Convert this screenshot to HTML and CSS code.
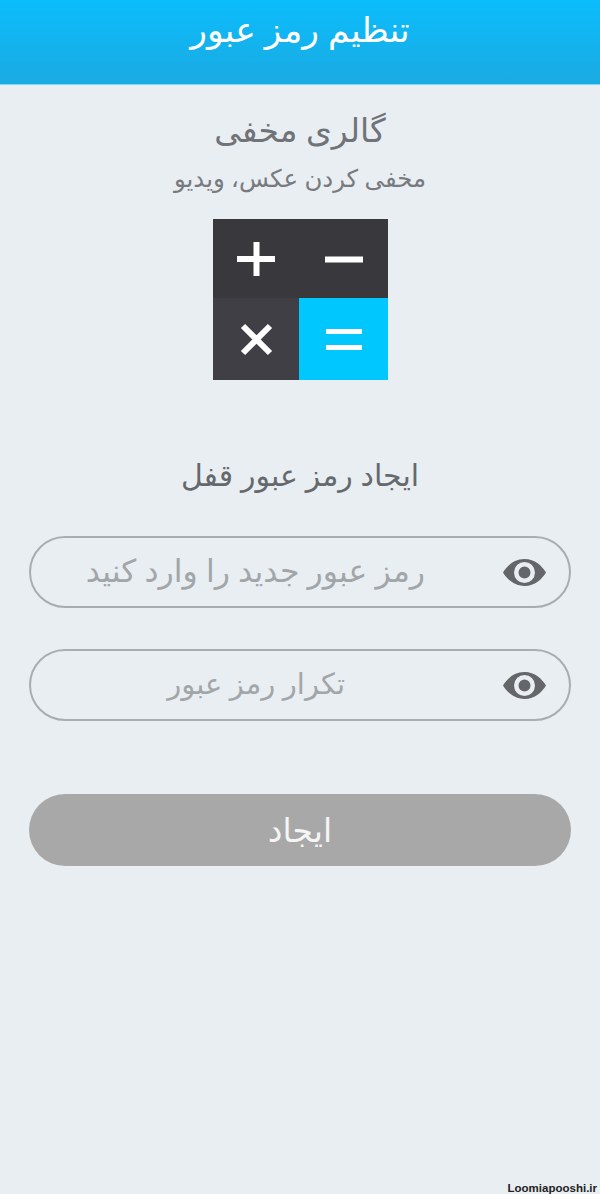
FILE: index.html
```html
<!DOCTYPE html>
<html lang="fa" dir="rtl">
<head><meta charset="utf-8"><title>تنظیم رمز عبور</title><link rel="stylesheet" href="styles.css"></head>
<body>
<div class="page">
  <header class="bar"><span class="bar-title">تنظیم رمز عبور</span></header>
  <main class="content">
    <h1 class="app-name">گالری مخفی</h1>
    <p class="app-sub">مخفی کردن عکس، ویدیو</p>
    <svg class="logo" width="175" height="161" viewBox="0 0 175 161">
      <rect width="175" height="80" fill="#39383d"/>
      <rect y="79" width="87" height="82" fill="#403f45"/>
      <rect x="86" y="79" width="89" height="82" fill="#00c8ff"/>
      <path d="M24 40H62M43.500 23V57" stroke="#fff" stroke-width="6"/>
      <path d="M112 40.500H150" stroke="#fff" stroke-width="6"/>
      <path d="M30 107L57 134M57 107L30 134" stroke="#fff" stroke-width="6"/>
      <path d="M113 112.500H149M113 128.500H149" stroke="#fff" stroke-width="5"/>
    </svg>
    <h2 class="form-title">ایجاد رمز عبور قفل</h2>
    <div class="field">
      <span class="placeholder ph-one">رمز عبور جدید را وارد کنید</span>
      <svg class="eye" width="43" height="27" viewBox="0 0 43 27"><path fill-rule="evenodd" fill="#646669" d="M21.500 0C32 0 39 7 43 13.500C39 20 32 27 21.500 27C11 27 4 20 0 13.500C4 7 11 0 21.500 0ZM21.500 3A10.500 10.500 0 1 0 21.500 24A10.500 10.500 0 1 0 21.500 3ZM21.500 7.500A6 6 0 1 1 21.500 19.500A6 6 0 1 1 21.500 7.500Z"/></svg>
    </div>
    <div class="field">
      <span class="placeholder ph-two">تکرار رمز عبور</span>
      <svg class="eye" width="43" height="27" viewBox="0 0 43 27"><path fill-rule="evenodd" fill="#646669" d="M21.500 0C32 0 39 7 43 13.500C39 20 32 27 21.500 27C11 27 4 20 0 13.500C4 7 11 0 21.500 0ZM21.500 3A10.500 10.500 0 1 0 21.500 24A10.500 10.500 0 1 0 21.500 3ZM21.500 7.500A6 6 0 1 1 21.500 19.500A6 6 0 1 1 21.500 7.500Z"/></svg>
    </div>
    <div class="submit">ایجاد</div>
  </main>
  <footer class="watermark">Loomiapooshi.ir</footer>
</div>
</body>
</html>
```
FILE: styles.css
```css
* { box-sizing: border-box; }
html, body { margin: 0; padding: 0; }
body { font-family: "Noto Sans", "DejaVu Sans", sans-serif; background: #e9eef2; }
.page { width: 600px; height: 1194px; display: flex; flex-direction: column; position: relative; overflow: hidden; }
.bar { height: 85px; background: linear-gradient(#0bbdfc, #1aaae2); border-bottom: 1px solid #7fd6f5; color: #fff; display: flex; justify-content: center; padding-top: 7px; }
.bar-title { font-size: 34.500px; line-height: 44px; }
.content { display: flex; flex-direction: column; align-items: center; padding: 0 29px; }
.app-name { font-size: 33px; font-weight: 400; color: #707377; margin: 23px 0 0; line-height: 44px; }
.app-sub { font-size: 24.400px; color: #777a7e; margin: 9px 0 0; line-height: 34px; }
.logo { margin-top: 24px; display: block; }
.form-title { font-size: 30px; font-weight: 400; color: #65696d; margin: 73px 0 0; line-height: 44px; }
.field { width: 100%; height: 72px; border: 2px solid #a9adb0; border-radius: 36px; display: flex; align-items: center; position: relative; }
.form-title + .field { margin-top: 39px; }
.field + .field { margin-top: 41px; }
.placeholder { color: #a2a6a9; position: absolute; line-height: 40px; top: 12px; }
.ph-one { right: 144px; font-size: 31.500px; }
.ph-two { right: 224px; font-size: 29px; }
.eye { position: absolute; left: 472px; top: 21px; }
.submit { width: 100%; height: 72px; margin-top: 73px; padding-bottom: 2px; background: #a8a8a8; border-radius: 36px; color: #f5f5f5; font-size: 33px; display: flex; align-items: center; justify-content: center; }
.watermark { position: absolute; right: 3px; bottom: 0; font-family: "Liberation Sans", sans-serif; font-size: 11.500px; font-weight: 700; color: #222; direction: ltr; }
```
